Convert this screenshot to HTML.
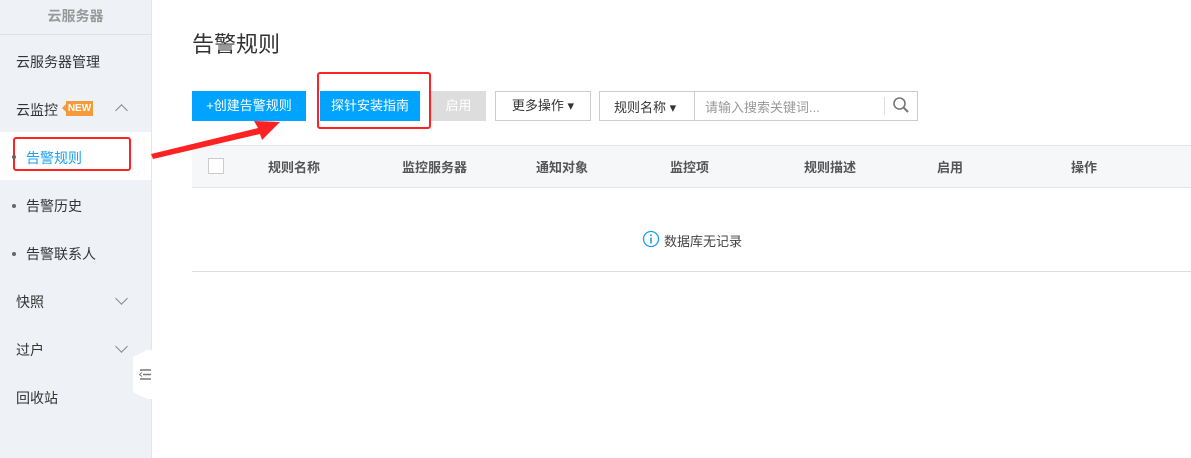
<!DOCTYPE html>
<html><head><meta charset="utf-8"><style>
*{margin:0;padding:0;box-sizing:border-box}
body{width:1191px;height:458px;overflow:hidden;background:#fff;font-family:"Liberation Sans","Noto Sans CJK SC",sans-serif;font-size:13px;color:#333;position:relative}
.abs{position:absolute}
.side{left:0;top:0;width:152px;height:458px;background:#eef1f5;border-right:1px solid #e2e5ea}
.sh{left:0;top:0;width:151px;height:35px;border-bottom:1px solid #dde1e6;text-align:center;line-height:32px;color:#999;font-weight:bold;font-size:14px}
.it{left:16px;font-size:14px;color:#333}
.chev{width:9px;height:9px;border-left:1.5px solid #888;border-top:1.5px solid #888}
.btn{top:91px;height:30px;line-height:30px;text-align:center;font-size:13px}
.th{top:157px;font-size:13px;color:#555;font-weight:bold}
</style></head><body>
<div class="abs side"></div>
<div class="abs sh">云服务器</div>
<div class="abs it" style="top:52px">云服务器管理</div>
<div class="abs it" style="top:100px">云监控</div>
<div class="abs" style="left:66px;top:101px;width:27px;height:15px;background:#f59a3c;color:#fff;font-size:10px;line-height:15px;text-align:center;font-weight:bold">NEW</div>
<div class="abs" style="left:62px;top:104px;border:4px solid transparent;border-right-color:#f59a3c;border-left:0"></div>
<div class="abs chev" style="left:117px;top:106px;transform:rotate(45deg)"></div>
<div class="abs" style="left:0;top:132px;width:151px;height:48px;background:#fff"></div>
<div class="abs" style="left:26px;top:148px;font-size:14px;color:#1a9ff2">告警规则</div>
<div class="abs" style="left:13px;top:137px;width:118px;height:34px;border:2px solid #f22;border-radius:3px"></div>
<div class="abs" style="left:12px;top:155px;width:4px;height:4px;border-radius:50%;background:#666"></div>
<div class="abs" style="left:12px;top:204px;width:4px;height:4px;border-radius:50%;background:#666"></div>
<div class="abs it" style="left:26px;top:196px">告警历史</div>
<div class="abs" style="left:12px;top:252px;width:4px;height:4px;border-radius:50%;background:#666"></div>
<div class="abs it" style="left:26px;top:244px">告警联系人</div>
<div class="abs it" style="top:292px">快照</div>
<div class="abs chev" style="left:117px;top:294px;transform:rotate(225deg)"></div>
<div class="abs it" style="top:340px">过户</div>
<div class="abs chev" style="left:117px;top:342px;transform:rotate(225deg)"></div>
<div class="abs it" style="top:388px">回收站</div>
<svg class="abs" style="left:133px;top:350px" width="19" height="49"><polygon points="19,0 19,49 14,49 0,42 0,7 14,0" fill="#fff"/><g stroke="#777" stroke-width="1.5"><line x1="7" y1="20" x2="18" y2="20"/><line x1="10" y1="24.5" x2="18" y2="24.5"/><line x1="7" y1="29" x2="18" y2="29"/></g><path d="M9 22.5 L6.5 24.5 L9 26.5" fill="none" stroke="#777"/></svg>

<div class="abs" style="left:192px;top:27px;font-size:22px;color:#333">告警规则</div>
<div class="abs btn" style="left:192px;width:114px;background:#00a4ff;color:#fff">+创建告警规则</div>
<div class="abs btn" style="left:320px;width:100px;background:#00a4ff;color:#fff">探针安装指南</div>
<div class="abs" style="left:317px;top:72px;width:114px;height:57px;border:2px solid #f22;border-radius:3px"></div>
<div class="abs btn" style="left:431px;width:55px;background:#ddd;color:#fff">启用</div>
<div class="abs btn" style="left:495px;width:96px;border:1px solid #ccc;line-height:28px;color:#333">更多操作 ▾</div>
<div class="abs btn" style="left:599px;width:319px;border:1px solid #ccc"></div>
<div class="abs" style="left:694px;top:92px;width:1px;height:28px;background:#ccc"></div>
<div class="abs" style="left:614px;top:97px;color:#333">规则名称 ▾</div>
<div class="abs" style="left:705px;top:97px;color:#999">请输入搜索关键词...</div>
<div class="abs" style="left:884px;top:97px;width:1px;height:18px;background:#ddd"></div>
<svg class="abs" style="left:892px;top:96px" width="18" height="18"><circle cx="7.5" cy="7.5" r="5.5" fill="none" stroke="#777" stroke-width="1.6"/><line x1="11.5" y1="11.5" x2="16" y2="16" stroke="#777" stroke-width="2"/></svg>

<div class="abs" style="left:192px;top:145px;width:999px;height:43px;background:#f6f7f9;border-top:1px solid #e2e4e8;border-bottom:1px solid #e2e4e8"></div>
<div class="abs" style="left:208px;top:158px;width:16px;height:16px;background:#fff;border:1px solid #ccc"></div>
<div class="abs th" style="left:268px">规则名称</div>
<div class="abs th" style="left:402px">监控服务器</div>
<div class="abs th" style="left:536px">通知对象</div>
<div class="abs th" style="left:670px">监控项</div>
<div class="abs th" style="left:804px">规则描述</div>
<div class="abs th" style="left:937px">启用</div>
<div class="abs th" style="left:1071px">操作</div>
<svg class="abs" style="left:642px;top:230px" width="18" height="18"><circle cx="9" cy="9" r="7.5" fill="none" stroke="#1a9ff2" stroke-width="1.3"/><circle cx="9" cy="5.2" r="1" fill="#1a9ff2"/><line x1="9" y1="7.5" x2="9" y2="13.5" stroke="#1a9ff2" stroke-width="1.6"/></svg>
<div class="abs" style="left:664px;top:231px;color:#444">数据库无记录</div>
<div class="abs" style="left:192px;top:271px;width:999px;height:1px;background:#ddd"></div>

<svg class="abs" style="left:148px;top:112px" width="140" height="50"><polygon points="3,42 110,16 106,9 132,10 114,28 112,22 5,47" fill="#f22"/></svg>
</body></html>
